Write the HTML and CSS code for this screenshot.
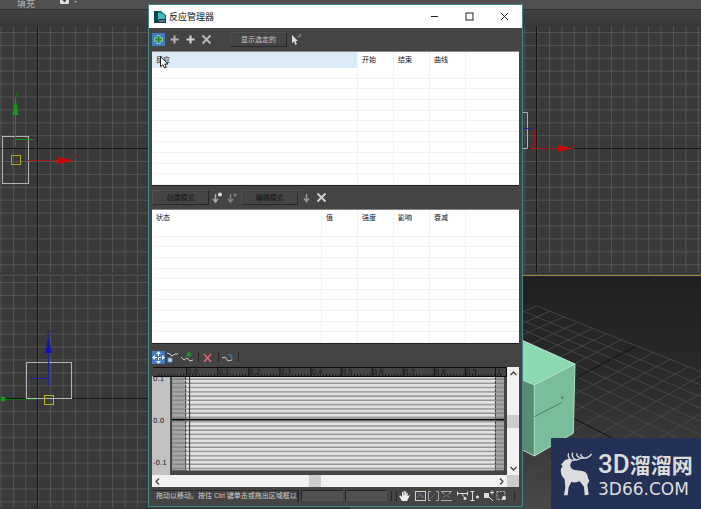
FILE: index.html
```html
<!DOCTYPE html>
<html lang="zh-CN">
<head>
<meta charset="utf-8">
<title>反应管理器</title>
<link rel="stylesheet" href="styles.css">
</head>
<body>
<header class="ribbon">
  <span class="ribbon-label">填充</span>
  <svg class="ribbon-icon" width="20" height="10" viewBox="0 0 20 10"><rect x="1" y="-3" width="9" height="7" rx="1" fill="#ddd"/><path d="M3.500 0h4l-2 2.500z" fill="#444"/><path d="M15 1h3l-1.500 2z" fill="#aaa"/></svg>
</header>
<div class="subbar"></div>

<main class="views">
  <section class="view" aria-label="顶视图">
    <svg class="scene" width="100%" height="100%">
      <defs><pattern id="g1" x="0.5" y="6" width="12.4" height="12.9" patternUnits="userSpaceOnUse"><path d="M0 .5H12.400M.5 0V12.900" stroke="#535353" fill="none"/></pattern></defs>
      <rect width="100%" height="100%" fill="url(#g1)"/>
      <path d="M37.500 0V300M0 122.500H400" stroke="#141414" fill="none"/>
      <rect x="2.500" y="110.500" width="26" height="47" fill="none" stroke="#b4b4b4"/>
      <path d="M15.500 72V121M16 113.500H34" stroke="#138a1c" fill="none"/><path d="M15.500 72l-3 17h6z" fill="#12991c"/><path d="M15 66l1.500 2 1.500-2M16.500 68v3" stroke="#176e1d" fill="none"/>
      <path d="M27 134.500H60M35.500 114V134" stroke="#a01515" fill="none"/><path d="M74 134.500l-16-3.500v7z" fill="#c90606"/><path d="M75 128l3 4m0-4l-3 4" stroke="#8a1717" fill="none"/>
      <rect x="11.500" y="129.500" width="9" height="9" fill="none" stroke="#b5a818"/>
    </svg>
  </section>
  <section class="view" aria-label="前视图">
    <svg class="scene" width="100%" height="100%">
      <defs><pattern id="g2" x="0.6" y="6" width="12.4" height="12.9" patternUnits="userSpaceOnUse"><path d="M0 .5H12.400M.5 0V12.900" stroke="#535353" fill="none"/></pattern></defs>
      <rect width="100%" height="100%" fill="url(#g2)"/>
      <path d="M186.500 0V300M0 122.500H400" stroke="#141414" fill="none"/>
      <path d="M170 86.500H177.500V122.500H170" stroke="#b4b4b4" fill="none"/>
      <path d="M170 102.500H183" stroke="#22228e"/>
      <path d="M180 122.500H224M184.500 104V122" stroke="#a01515" fill="none"/><path d="M223 122.500l-16-3.500v7z" fill="#c90606"/><path d="M223 117l3 4m0-4l-3 4" stroke="#8a1717" fill="none"/>
    </svg>
  </section>
  <section class="view" aria-label="左视图">
    <svg class="scene" width="100%" height="100%">
      <defs><pattern id="g3" x="0.5" y="6" width="12.400" height="12.9" patternUnits="userSpaceOnUse"><path d="M0 .5H12.400M.5 0V12.900" stroke="#535353" fill="none"/></pattern></defs>
      <rect width="100%" height="100%" fill="url(#g3)"/>
      <path d="M37.500 0V300M0 122.500H400" stroke="#141414" fill="none"/>
      <rect x="26.500" y="86.500" width="45" height="36" fill="none" stroke="#b4b4b4"/>
      <path d="M48.500 62V110M29 102.500H48" stroke="#22229a" fill="none"/><path d="M48.500 60l-3 17h6z" fill="#1111b5"/><path d="M47 55h3.500l-3.500 4h3.500" stroke="#22228e" fill="none"/>
      <path d="M0 123.500H37M29.500 104V122" stroke="#126b18" fill="none"/><circle cx="3" cy="123" r="2.500" fill="#12991c"/>
      <rect x="44.500" y="119.500" width="9" height="9" fill="none" stroke="#c0b71c"/>
    </svg>
  </section>
  <section class="view view-active" aria-label="透视图">
    <svg class="scene" width="100%" height="100%">
      <g transform="translate(170 -16) scale(.3333)" fill="none" stroke-width="2.500">
        <path stroke="#4a4a4a" d="M50 138L543 335M10 154L543 375M10 182L543 411M10 210L543 445M10 242L543 485M10 275L543 526M10 312L543 568M10 353L543 617M10 448L400 653M10 500L300 657M10 560L160 645M50 138L10 155M88 155L10 189M130 171L10 224M172 188L10 263M215 206L10 306M258 222L10 347M302 240L10 390M400 278L100 438M450 298L100 488M505 320L100 545M543 347L10 655M543 400L100 660M543 460L160 690"/>
        <path stroke="#111" stroke-width="3" d="M350 258L10 436M10 398L543 670"/>
        <path fill="#8bdab1" d="M0 238L165 312L43 375L0 357z"/>
        <path fill="#79bd9b" d="M43 375L165 312L160 520L43 588z"/>
        <path fill="#568c71" d="M0 357L43 375V588L0 566z"/>
        <path stroke="#c8f1dc" d="M0 238L165 312L160 520L43 588L0 566M0 357L43 375L165 312M43 375V588"/>
        <path stroke="#456c59" d="M43 470L125 428M124 409l6 8m0-8l-6 8"/>
      </g>
    </svg>
    <aside class="brand">
      <svg class="deer" viewBox="28 48 102 140"><path fill="#dcdcdc" d="M34 90L46 76L58 72L67 80L62 88Q60 100 72 105L98 109Q114 112 115 130L119 138L113 150L117 180L105 182L103 156L90 140Q78 145 65 142L57 158L54 182L43 182L47 158L45 134Q30 118 34 102L39 94z"/><path fill="none" stroke="#dcdcdc" stroke-width="4" d="M56 75Q78 80 96 70Q114 73 126 58M64 76Q52 66 57 56M78 75Q64 67 69 54M94 71Q78 65 82 56M104 70Q92 66 94 58"/></svg>
      <div class="brand-text"><div class="brand-name"><span class="brand-3d">3D</span>溜溜网</div><div class="brand-url">3D66.COM</div></div>
    </aside>
  </section>
</main>

<div class="dialog" role="dialog" aria-labelledby="dlg-title">
  <div class="titlebar">
    <svg width="12" height="12" viewBox="0 0 12 12"><path d="M0 0h7l5 4v8H0z" fill="#0d6f78"/><path d="M0 0h4v12H0z" fill="#0a4550"/><path d="M4 2h3q4 1 4 4t-4 3H4z" fill="#48b9b6"/><path d="M5 8h7v4H3z" fill="#123a42"/><path d="M5 10h6" stroke="#bde" stroke-width=".8"/></svg>
    <h1 id="dlg-title">反应管理器</h1>
    <button class="winbtn" aria-label="最小化"><svg width="9" height="9"><path d="M1 4.500h7" stroke="#222"/></svg></button>
    <button class="winbtn" aria-label="最大化"><svg width="9" height="9"><rect x="1" y="1" width="7" height="7" fill="none" stroke="#222"/></svg></button>
    <button class="winbtn" aria-label="关闭"><svg width="9" height="9"><path d="M1 1l7 7M8 1L1 8" stroke="#222"/></svg></button>
  </div>

  <div class="toolbar">
    <button class="tool tool-on" aria-label="添加主控"><svg width="13" height="13"><path d="M6.500 2v9M2 6.500h9" stroke="#8cc9a0" stroke-width="4"/><path d="M6.500 3v7M3 6.500h7" stroke="#248a37" stroke-width="2"/></svg></button>
    <button class="tool" aria-label="添加从属"><svg width="13" height="13"><path d="M6.500 2.500v8M2.500 6.500h8" stroke="#b4b4b4" stroke-width="2"/></svg></button>
    <button class="tool" aria-label="添加选定项"><svg width="13" height="13"><path d="M6.500 2.500v8M2.500 6.500h8" stroke="#d5d5d5" stroke-width="2"/></svg></button>
    <button class="tool" aria-label="删除选定项"><svg width="13" height="13"><path d="M2.500 2.500l8 8M10.500 2.500l-8 8" stroke="#bcbcbc" stroke-width="1.800"/></svg></button>
    <button class="push push-show">显示选定的</button>
    <button class="tool" aria-label="选择"><svg width="13" height="13"><path d="M2 2v8l2-1.500L5.500 12 7 11 5.500 8H8z" fill="#ddd"/><path d="M7 4l2-2 2-1-1 3H8" stroke="#808080" fill="none"/></svg></button>
  </div>

  <table class="list">
    <colgroup><col><col class="c"><col class="c"><col class="c"><col class="last"></colgroup>
    <thead><tr><th class="hot">反应</th><th>开始</th><th>结束</th><th>曲线</th><th></th></tr></thead>
    <tbody>
      <tr><td></td><td></td><td></td><td></td><td></td></tr><tr><td></td><td></td><td></td><td></td><td></td></tr>
      <tr><td></td><td></td><td></td><td></td><td></td></tr><tr><td></td><td></td><td></td><td></td><td></td></tr>
      <tr><td></td><td></td><td></td><td></td><td></td></tr><tr><td></td><td></td><td></td><td></td><td></td></tr>
      <tr><td></td><td></td><td></td><td></td><td></td></tr><tr><td></td><td></td><td></td><td></td><td></td></tr>
      <tr><td></td><td></td><td></td><td></td><td></td></tr><tr><td></td><td></td><td></td><td></td><td></td></tr>
      <tr><td></td><td></td><td></td><td></td><td></td></tr>
    </tbody>
  </table>

  <div class="toolbar toolbar-state">
    <button class="push dim">创建模式</button>
    <button class="tool" aria-label="创建状态"><svg width="13" height="13"><path d="M4.500 3v8M2 8l2.500 3L7 8" stroke="#aaa" fill="none" stroke-width="1.500"/><circle cx="9" cy="3.500" r="2" fill="#ddd"/></svg></button>
    <button class="tool" aria-label="附加状态"><svg width="13" height="13"><path d="M4.500 3v8M2 8l2.500 3L7 8" stroke="#858585" fill="none" stroke-width="1.500"/><path d="M9 2v4M7 4h4" stroke="#888"/></svg></button>
    <button class="push dim">编辑模式</button>
    <button class="tool" aria-label="设置状态"><svg width="13" height="13"><path d="M6.500 3v7M4 7.500l2.500 3 2.500-3" stroke="#999" fill="none" stroke-width="1.500"/></svg></button>
    <button class="tool" aria-label="删除状态"><svg width="13" height="13"><path d="M2.500 2.500l8 8M10.500 2.500l-8 8" stroke="#d0d0d0" stroke-width="2"/></svg></button>
  </div>

  <table class="list">
    <colgroup><col><col class="c"><col class="c"><col class="c"><col class="c"><col class="last"></colgroup>
    <thead><tr><th>状态</th><th>值</th><th>强度</th><th>影响</th><th>衰减</th><th></th></tr></thead>
    <tbody>
      <tr><td></td><td></td><td></td><td></td><td></td><td></td></tr><tr><td></td><td></td><td></td><td></td><td></td><td></td></tr>
      <tr><td></td><td></td><td></td><td></td><td></td><td></td></tr><tr><td></td><td></td><td></td><td></td><td></td><td></td></tr>
      <tr><td></td><td></td><td></td><td></td><td></td><td></td></tr><tr><td></td><td></td><td></td><td></td><td></td><td></td></tr>
      <tr><td></td><td></td><td></td><td></td><td></td><td></td></tr><tr><td></td><td></td><td></td><td></td><td></td><td></td></tr>
      <tr><td></td><td></td><td></td><td></td><td></td><td></td></tr><tr><td></td><td></td><td></td><td></td><td></td><td></td></tr>
      <tr><td></td><td></td><td></td><td></td><td></td><td></td></tr>
    </tbody>
  </table>

  <div class="toolbar toolbar-curve">
    <button class="tool tool-on" aria-label="移动点"><svg width="13" height="13"><path d="M6.500 2v9M2 6.500h9" stroke="#fff" stroke-dasharray="3 1"/><path d="M6.500 0l2.500 3H4zM6.500 13L4 10h5zM0 6.500L3 4v5zM13 6.500L10 4v5z" fill="#e4efff"/></svg></button>
    <button class="tool" aria-label="缩放点"><svg width="13" height="13"><path d="M1 2l3 1 2 2 3-2h3" stroke="#ccc" fill="none"/><rect x="2" y="7" width="4" height="4" fill="#cde" stroke="#5c93c8"/></svg></button>
    <button class="tool" aria-label="插入点"><svg width="14" height="13"><path d="M1 6l3 3 3-2 3 3 3-1" stroke="#ccc" fill="none"/><path d="M9 1v5M6.500 3.500h5" stroke="#1d962b" stroke-width="2"/></svg></button>
    <span class="sep"></span>
    <button class="tool" aria-label="删除点"><svg width="13" height="13"><path d="M3 3l7 8M10 3l-7 8" stroke="#df6673" stroke-width="1.500"/></svg></button>
    <span class="sep"></span>
    <button class="tool" aria-label="重置曲线"><svg width="13" height="13"><path d="M1 7l3-1 3 4 4-1" stroke="#ccc" fill="none"/><path d="M7 4q4-1 4 4" stroke="#3d75ad" fill="none" stroke-width="1.500"/></svg></button>
    <span class="sep"></span>
  </div>

  <div class="curve">
    <svg class="plot" viewBox="0 0 354 108">
      <defs>
        <pattern id="rows" y="8.500" width="354" height="4.250" patternUnits="userSpaceOnUse"><path d="M0 3.500H354" stroke="#777" stroke-width="1"/></pattern>
        <pattern id="ticks" x="34" width="3.1" height="2" patternUnits="userSpaceOnUse"><path d="M.5 0V2" stroke="#151515"/></pattern>
      </defs>
      <rect width="354" height="108" fill="#444"/>
      <rect y="9" width="18" height="99" fill="#c2c2c2"/>
      <path d="M1 .5H353.500V9.500H1" fill="none" stroke="#0c0c0c"/>
      <rect x="6" y="7" width="344" height="2" fill="url(#ticks)"/>
      <path d="M34.500 1V9M65.500 1V9M96.500 1V9M127.500 1V9M158.500 1V9M188.500 1V9M219.500 1V9M250.500 1V9M281.500 1V9M312.500 1V9M342.500 1V9" stroke="#151515"/>
      <g class="ruler-num"><text x="35" y="7">0.0</text><text x="66" y="7">0.1</text><text x="97" y="7">0.2</text><text x="128" y="7">0.3</text><text x="159" y="7">0.4</text><text x="189" y="7">0.5</text><text x="220" y="7">0.6</text><text x="251" y="7">0.7</text><text x="282" y="7">0.8</text><text x="313" y="7">0.9</text><text x="344" y="7">1</text></g>
      <rect x="20" y="10" width="331" height="93" fill="#a3a7a5"/>
      <rect x="34" y="10" width="308" height="93" fill="#e2e2e2"/>
      <rect x="20" y="10" width="331" height="93" fill="url(#rows)"/>
      <path d="M20 52.500H351" stroke="#000" stroke-width="1.600"/>
      <path d="M33.500 10V103M342.500 10V103" stroke="#444" stroke-dasharray="3 1"/><path d="M37.500 10V103" stroke="#333"/>
      <g class="axis-num"><text x="1" y="14">0.1</text><text x="1" y="56">0.0</text><text x="1" y="98">-0.1</text></g>
    </svg>
    <div class="vscroll"><button aria-label="向上"><svg width="7" height="5"><path d="M.5 4l3-3 3 3" fill="none" stroke="#444" stroke-width="1.300"/></svg></button><span class="vthumb"></span><button aria-label="向下"><svg width="7" height="5"><path d="M.5 1l3 3 3-3" fill="none" stroke="#444" stroke-width="1.300"/></svg></button></div>
    <div class="hscroll"><button aria-label="向左"><svg width="5" height="7"><path d="M4 .5l-3 3 3 3" fill="none" stroke="#444" stroke-width="1.300"/></svg></button><span class="hthumb"></span><button aria-label="向右"><svg width="5" height="7"><path d="M1 .5l3 3-3 3" fill="none" stroke="#444" stroke-width="1.300"/></svg></button></div>
    <span class="corner"></span>
  </div>

  <div class="status">
    <p class="hint">拖动以移动。按住 Ctrl 键单击或拖出区域框以</p>
    <input class="num" aria-label="位置"><input class="num" aria-label="数值">
    <span class="sep"></span><span class="sep"></span>
    <button class="mini" aria-label="平移"><svg width="11" height="12"><path d="M3 11L0 6l1.500-.5L3 7V2h1v3h.500V1h1.200v4H6V1.500h1.200V5.500h.300V3h1.200v3L11 5 8 11z" fill="#eee"/></svg></button>
    <button class="mini gap" aria-label="最大化显示"><svg width="11" height="12"><rect x=".5" y="1.500" width="10" height="9" fill="none" stroke="#ccc"/><path d="M2 8q4-7 7 0M3 3l5 5" stroke="#667390" fill="none"/></svg></button>
    <button class="mini" aria-label="水平最大化"><svg width="11" height="12"><path d="M3 1.500H.5v9H3M8 1.500h2.500v9H8" fill="none" stroke="#aaa"/><path d="M3 8l4-4" stroke="#667390"/></svg></button>
    <button class="mini" aria-label="垂直最大化"><svg width="11" height="12"><path d="M0 1.500h11M0 10.500h11M1 1.500l2 3M10 1.500l-2 3" stroke="#aaa"/><path d="M2 8q3-5 7 0" stroke="#667390" fill="none"/></svg></button>
    <button class="mini gap" aria-label="水平缩放"><svg width="11" height="12"><path d="M1 3.500h9M.5 1.500v4M10.500 1.500v4M5 4l3 4" stroke="#ddd" fill="none"/><circle cx="8" cy="8.500" r="1.500" fill="#ddd"/></svg></button>
    <button class="mini" aria-label="垂直缩放"><svg width="11" height="12"><path d="M2.500 1v10M0.500 1.500h4M0.500 10.500h4" stroke="#ddd"/><circle cx="7.500" cy="7" r="1.500" fill="#ddd"/></svg></button>
    <button class="mini" aria-label="缩放"><svg width="11" height="12"><path d="M1 3h5v5H1z" fill="#ddd"/><path d="M7 2.500h4M9 .5v4M6 7l4 4" stroke="#ddd" fill="none"/></svg></button>
    <button class="mini" aria-label="缩放区域"><svg width="11" height="12"><path d="M1 1.500h8v8H1z" fill="none" stroke="#bbb" stroke-dasharray="2 1"/><circle cx="8" cy="8" r="2" fill="#ddd"/></svg></button>
    <span class="sep sep-end"></span>
  </div>
</div>
<svg class="cursor" width="9" height="13" viewBox="0 0 9 13"><path d="M.5.700v10l2.300-2L4.500 12l1.700-.8L4.800 8h3.200z" fill="#fff" stroke="#222"/></svg>
</body>
</html>
```
FILE: styles.css
```css
* { box-sizing: border-box; }
body {
  margin: 0;
  min-height: 100vh;
  display: flex;
  flex-direction: column;
  position: relative;
  overflow: hidden;
  background: #393939;
  font: 7px/10px "Liberation Sans", "Noto Sans CJK SC", sans-serif;
  color: #111;
}
button, input { font: inherit; margin: 0; padding: 0; border: 0; background: none; color: inherit; }
svg { display: block; flex: none; }

.ribbon {
  height: 9px;
  padding-left: 17px;
  display: flex;
  gap: 24px;
  background: #505050;
  color: #b5b5b5;
  font-size: 9px;
}
.ribbon-label { line-height: 8px; }
.subbar {
  height: 17px;
  border-top: 1px solid #343434;
  border-bottom: 1px solid #333;
  background: linear-gradient(#424242, #3a3a3a);
}

.views {
  flex: 1;
  display: grid;
  grid-template-columns: 350px 1fr;
  grid-template-rows: 248px 1fr;
  row-gap: 2px;
  background: #484848;
}
.view {
  position: relative;
  min-height: 0;
  overflow: hidden;
  border-bottom: 1px solid #333;
  background: #393939;
}
.view-active {
  border: 0;
  box-shadow: 0 -1px #a58245;
  background: linear-gradient(#202020, #292929 40%, #484848);
}
.scene { position: absolute; inset: 0; }

.brand {
  position: absolute;
  right: 0;
  bottom: 0;
  width: 150px;
  height: 71px;
  padding: 12px 9px 10px 8px;
  display: flex;
  gap: 5px;
  background: #243156;
  color: #dcdcdc;
}
.deer { width: 34px; height: 48px; }
.brand-text { white-space: nowrap; }
.brand-name {
  height: 29px;
  font: 700 21px/29px "Noto Sans CJK SC", sans-serif;
}
.brand-3d { font: 500 26px/28px Roboto, sans-serif; }
.brand-url { font: 17px/20px "DejaVu Sans", sans-serif; }

.dialog {
  position: absolute;
  left: 148px;
  top: 4px;
  width: 375px;
  padding: 0 3px 2px;
  border: 1px solid #41898b;
  background: #444;
}
.titlebar {
  height: 23px;
  margin: 0 -3px;
  padding: 0 2px 0 5px;
  display: flex;
  align-items: center;
  gap: 3px;
  background: #fff;
}
.titlebar h1 {
  flex: 1;
  margin: 0;
  font: 9px/14px "Noto Sans CJK SC", sans-serif;
}
.winbtn { width: 32px; height: 22px; display: grid; place-items: center; }

.toolbar {
  height: 23px;
  display: flex;
  align-items: center;
  gap: 3px;
}
.tool { min-width: 13px; height: 13px; display: grid; place-items: center; }
.tool-on { background: #447bc6; }
.push {
  width: 57px;
  height: 15px;
  border: 1px solid #505050;
  border-right-color: #292929;
  border-bottom-color: #292929;
  color: #c8c8c8;
}
.push-show { margin-left: 14px; }
.dim { color: #151515; }
.toolbar-state { gap: 2px; }
.toolbar-curve { gap: 1px; padding-top: 3px; }
.sep { width: 1px; height: 10px; background: #252525; }
.toolbar-curve .sep { margin: 0 1px 0 3px; }

.list {
  width: 100%;
  height: 135px;
  table-layout: fixed;
  border-collapse: separate;
  border-spacing: 0;
  border-top: 1px solid #888;
  border-bottom: 1px solid #222;
  background: #fff;
}
.list .c { width: 36px; }
.list .last { width: 53px; }
.list th {
  height: 16px;
  padding: 0 4px;
  border-right: 1px solid #f2f2f2;
  text-align: left;
  font-weight: 400;
}
.list td { padding: 0; border-right: 1px solid #f2f2f2; border-bottom: 1px solid #f2f2f2; }
.list tr > :last-child { border-right: 0; }
.list .hot { background: #dbeaf7; }

.curve {
  display: grid;
  grid-template-columns: 1fr 12px;
  grid-template-rows: auto 12px;
}
.plot { width: 100%; height: auto; }
.ruler-num, .axis-num { font: 7px "DejaVu Sans", sans-serif; fill: #181818; }
.vscroll, .hscroll {
  display: flex;
  align-items: center;
  justify-content: space-between;
  background: #f1f1f1;
}
.vscroll { flex-direction: column; padding: 4px 0; }
.hscroll { padding: 0 3px; }
.vthumb { width: 12px; height: 13px; background: #cdcdcd; }
.hthumb { width: 12px; height: 12px; margin-left: -30px; background: #cdcdcd; }
.corner { background: #cdcdcd; }

.status {
  height: 17px;
  display: flex;
  align-items: center;
  gap: 2px;
}
.hint {
  width: 147px;
  height: 12px;
  margin: 0;
  padding-left: 4px;
  border-top: 1px solid #292929;
  border-right: 2px solid #292929;
  color: #cfcfcf;
  white-space: nowrap;
}
.num {
  width: 42px;
  height: 11px;
  border: 1px solid #222;
  border-right-color: #555;
  border-bottom-color: #555;
  background: #505050;
}
.status .sep { margin-left: 2px; }
.mini { width: 11px; height: 12px; }
.gap { margin-left: 3px; }
.status .sep-end { margin-left: 5px; }

.cursor { position: absolute; left: 160px; top: 56px; }
```
